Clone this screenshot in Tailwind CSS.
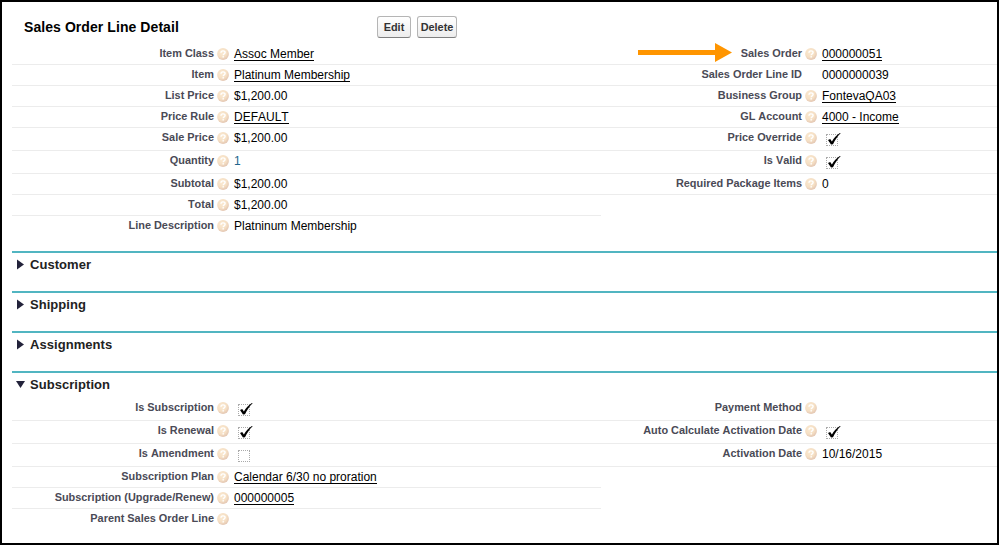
<!DOCTYPE html>
<html lang="en">
<head>
<meta charset="utf-8">
<title>Sales Order Line Detail</title>
<script src="https://cdn.jsdelivr.net/npm/@tailwindcss/browser@4"></script>
</head>
<body class="bg-white">
<svg class="absolute w-0 h-0">
  <defs>
    <radialGradient id="orb" cx="40%" cy="35%" r="65%">
      <stop offset="0" stop-color="#fbead2"/><stop offset=".65" stop-color="#f5dfc4"/><stop offset="1" stop-color="#e4c8b4"/>
    </radialGradient>
  </defs>
  <symbol id="help" viewBox="0 0 12 12">
    <circle cx="6" cy="6" r="5.9" fill="url(#orb)"/>
    <path d="M4 4.7C4 3.3 5 2.9 6 2.9s2.1.6 2.1 1.7c0 1.3-1.9 1.3-1.9 2.6" fill="none" stroke="#fff" stroke-width="1.4"/>
    <rect x="5.5" y="8.1" width="1.4" height="1.4" fill="#fff"/>
  </symbol>
  <symbol id="check" viewBox="0 0 16 15">
    <path d="M2 7.900 4.200 6.900 5.900 9.400C7.800 6 10.500 2.900 13.900.900L14.700 1.200C11.500 4 9.200 7.800 7 12.200L5 12.600Z" fill="#000"/>
  </symbol>
</svg>
<main class="relative w-[999px] h-[545px] border-2 border-black bg-white pl-[10px] font-['Liberation_Sans',Arial,sans-serif] text-[12px] text-black overflow-hidden [font-kerning:none]">
  <header class="flex h-[42px] pl-3 pt-[14px]">
    <h2 class="w-[353px] text-[14px] leading-[16px] pt-[3px] font-bold tracking-[0.07px]">Sales Order Line Detail</h2>
    <div class="flex gap-[6px] h-[22px]">
      <button class="w-[34px] h-[22px] rounded-[3px] border border-[#b5b5b5] border-b-[#7f7f7f] bg-linear-to-b from-white to-[#ededed] text-[10.9px] leading-[20px] font-bold text-[#333]">Edit</button>
      <button class="w-[40px] h-[22px] rounded-[3px] border border-[#b5b5b5] border-b-[#7f7f7f] bg-linear-to-b from-white to-[#ededed] text-[10.9px] leading-[20px] font-bold text-[#333]">Delete</button>
    </div>
  </header>
  <section id="detail" class="h-[207px]"></section>
  <section class="h-10 border-t-2 border-[#51b5c1] pt-1"><h3 class="flex items-center gap-[6px] pl-[5px] text-[13px] leading-[15px] font-bold text-[#222] tracking-[0.05px]"><svg class="w-[7px] h-[11px]" viewBox="0 0 7 11"><path d="M0 .5 7 5.500 0 10.500Z" fill="#23233b"/></svg>Customer</h3></section>
  <section class="h-10 border-t-2 border-[#51b5c1] pt-1"><h3 class="flex items-center gap-[6px] pl-[5px] text-[13px] leading-[15px] font-bold text-[#222] tracking-[0.05px]"><svg class="w-[7px] h-[11px]" viewBox="0 0 7 11"><path d="M0 .5 7 5.500 0 10.500Z" fill="#23233b"/></svg>Shipping</h3></section>
  <section class="h-10 border-t-2 border-[#51b5c1] pt-1"><h3 class="flex items-center gap-[6px] pl-[5px] text-[13px] leading-[15px] font-bold text-[#222] tracking-[0.05px]"><svg class="w-[7px] h-[11px]" viewBox="0 0 7 11"><path d="M0 .5 7 5.500 0 10.500Z" fill="#23233b"/></svg>Assignments</h3></section>
  <section class="border-t-2 border-[#51b5c1] pt-1"><h3 class="flex items-center gap-[5px] pl-1 h-[15px] mb-[6px] text-[13px] leading-[15px] font-bold text-[#222] tracking-[0.05px]"><svg class="w-[9px] h-[7px]" viewBox="0 0 9 7"><path d="M0 0H9L4.500 7Z" fill="#23233b"/></svg>Subscription</h3>
    <div id="subscription"></div>
  </section>
  <svg class="absolute left-[636px] top-[41px] w-[95px] h-[20px]" viewBox="0 0 95 20"><path d="M0 7H77V0L94 9.500 77 19V12H0Z" fill="#ff9500"/></svg>
</main>
<script>
  // Field: [label, value, kind, hasHelp]; kinds: link, text, blue, on, off
  const detail = [
    [21, ['Item Class', 'Assoc Member', 'link'], ['Sales Order', '000000051', 'link']],
    [21, ['Item', 'Platinum Membership', 'link'], ['Sales Order Line ID', '0000000039', 'text', false]],
    [21, ['List Price', '$1,200.00', 'text'], ['Business Group', 'FontevaQA03', 'link']],
    [21, ['Price Rule', 'DEFAULT', 'link'], ['GL Account', '4000 - Income', 'link']],
    [23, ['Sale Price', '$1,200.00', 'text'], ['Price Override', '', 'on']],
    [23, ['Quantity', '1', 'blue'], ['Is Valid', '', 'on']],
    [21, ['Subtotal', '$1,200.00', 'text'], ['Required Package Items', '0', 'text']],
    [21, ['Total', '$1,200.00', 'text']],
    [21, ['Line Description', 'Platninum Membership', 'text']]
  ];
  const subscription = [
    [23, ['Is Subscription', '', 'on'], ['Payment Method', '', 'text']],
    [23, ['Is Renewal', '', 'on'], ['Auto Calculate Activation Date', '', 'on']],
    [23, ['Is Amendment', '', 'off'], ['Activation Date', '10/16/2015', 'text']],
    [21, ['Subscription Plan', 'Calendar 6/30 no proration', 'link']],
    [21, ['Subscription (Upgrade/Renew)', '000000005', 'link']],
    [21, ['Parent Sales Order Line', '', 'text']]
  ];
  function value(v, kind) {
    if (kind === 'link') return `<a class="block h-[14px] mt-[3px] leading-[14px] border-b border-black">${v}</a>`;
    if (kind === 'on' || kind === 'off')
      return `<span class="relative block mt-[6px] ml-1 w-3 h-3 border border-dotted border-[#aaa]">${kind === 'on' ? '<svg class="absolute -left-[1px] -top-[3px] w-4 h-[15px]"><use href="#check"/></svg>' : ''}</span>`;
    return `<span class="block pt-[2px] leading-[16px] ${kind === 'blue' ? 'text-[#20658c]' : ''}">${v}</span>`;
  }
  function field([label, v, kind, help = true], width, labelWidth, line) {
    return `<div class="flex items-start ${width} ${line ? 'border-b border-[#ececec]' : ''}">
      <span class="${labelWidth} shrink-0 text-right pt-[1px] text-[10.92px] leading-[16px] font-bold text-[#4a4a56] whitespace-nowrap">${label}</span>
      <span class="w-3 h-3 mt-1 ml-[3px] mr-[5px] shrink-0">${help ? '<svg class="w-3 h-3"><use href="#help"/></svg>' : ''}</span>
      ${value(v, kind)}</div>`;
  }
  function render(id, rows) {
    document.getElementById(id).innerHTML = rows.map(([h, left, right], i) =>
      `<div class="flex ${h === 23 ? 'h-[23px]' : 'h-[21px]'}">${field(left, 'w-[589px]', 'w-[202px]', i < rows.length - 1)}${right ? field(right, 'w-[396px]', 'w-[201px]', true) : ''}</div>`).join('');
  }
  render('detail', detail);
  render('subscription', subscription);
</script>
</body>
</html>
